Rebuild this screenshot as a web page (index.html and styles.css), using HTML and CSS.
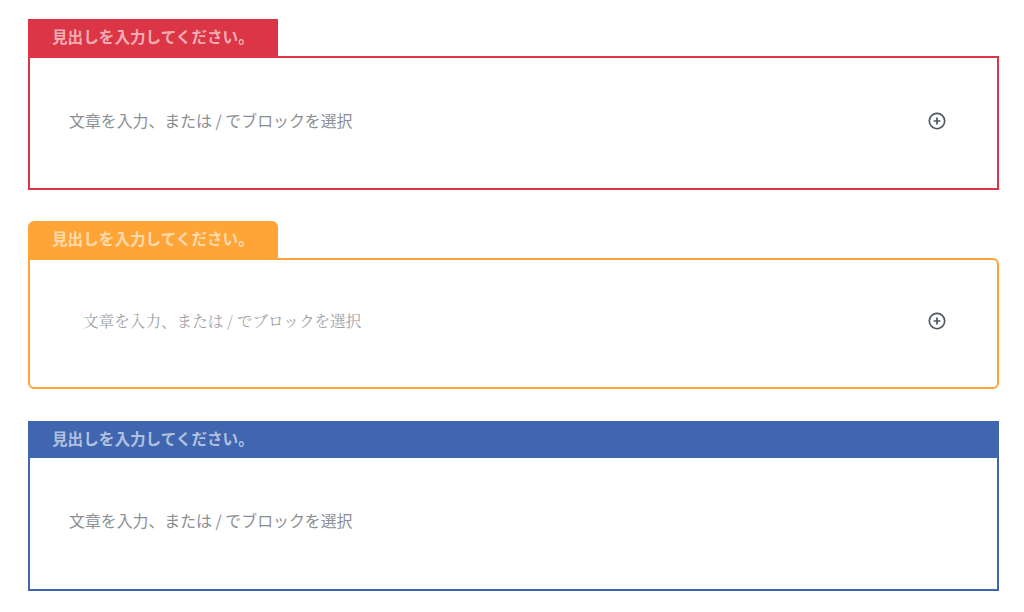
FILE: index.html
```html
<!DOCTYPE html>
<html lang="ja">
<head>
<meta charset="utf-8">
<link rel="stylesheet" href="styles.css">
</head>
<body>
<div class="page">
  <section class="block red">
    <div class="tab">見出しを入力してください。</div>
    <div class="body">
      <span class="ph">文章を入力、または / でブロックを選択</span>
      <svg class="plus" viewBox="0 0 24 24" width="22" height="22"><circle cx="12" cy="12" r="8.4" fill="none" stroke="#50575e" stroke-width="1.8"/><path d="M12 8.3v7.4M8.3 12h7.4" stroke="#50575e" stroke-width="1.9" fill="none"/></svg>
    </div>
  </section>
  <section class="block orange">
    <div class="tab">見出しを入力してください。</div>
    <div class="body">
      <span class="ph serif">文章を入力、または / でブロックを選択</span>
      <svg class="plus" viewBox="0 0 24 24" width="22" height="22"><circle cx="12" cy="12" r="8.4" fill="none" stroke="#50575e" stroke-width="1.8"/><path d="M12 8.3v7.4M8.3 12h7.4" stroke="#50575e" stroke-width="1.9" fill="none"/></svg>
    </div>
  </section>
  <section class="block blue">
    <div class="tab wide">見出しを入力してください。</div>
    <div class="body">
      <span class="ph">文章を入力、または / でブロックを選択</span>
    </div>
  </section>
</div>
</body>
</html>
```
FILE: styles.css
```css
html, body { margin: 0; padding: 0; background: #fff; }
body { font-family: "Noto Sans CJK JP", "Noto Sans", sans-serif; }
.page {
  width: 971px;
  margin-left: 28px;
  padding-top: 19px;
  display: flex;
  flex-direction: column;
  gap: 31px;
}
.block { display: flex; flex-direction: column; }
.tab {
  width: 250px;
  height: 37px;
  box-sizing: border-box;
  padding-left: 24px;
  padding-bottom: 1px;
  display: flex;
  align-items: center;
  font-size: 15.6px;
  font-weight: bold;
  color: rgba(255,255,255,0.62);
  line-height: 1;
}
.tab.wide { width: auto; }
.body {
  height: 134px;
  box-sizing: border-box;
  border: 2px solid;
  display: flex;
  align-items: center;
  justify-content: space-between;
  padding: 0 49px 5px 39px;
}
.ph {
  font-size: 15.9px;
  color: #8c8f94;
  line-height: 1;
}
.ph.serif {
  font-family: "Noto Serif CJK JP", "Liberation Serif", serif;
  padding-left: 14px;
  font-size: 15.6px;
  color: #a0a2a6;
}
.plus { display: block; }

.red .tab { background: #dc3545; }
.red .body { border-color: #dc3545; }

.orange .tab { background: #ffa537; border-radius: 6px 6px 0 0; }
.orange .body { border-color: #ffa537; border-radius: 0 6px 6px 6px; height: 131px; }

.blue { margin-top: 1px; }
.blue .tab { background: #4066b0; }
.blue .body { border-color: #4066b0; border-top: none; height: 133px; }
```
